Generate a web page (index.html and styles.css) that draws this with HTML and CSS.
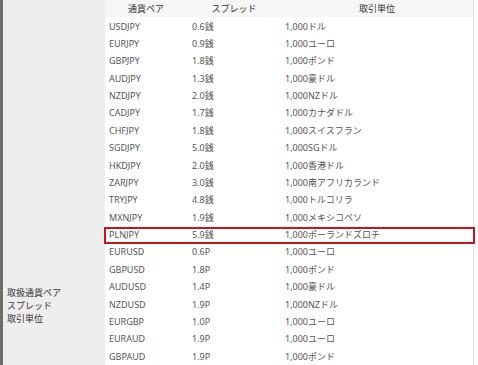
FILE: index.html
```html
<!DOCTYPE html>
<html lang="ja">
<head>
<meta charset="utf-8">
<link rel="stylesheet" href="styles.css">
</head>
<body>
<div class="page">
  <div class="label">
    <div>取扱通貨ペア</div>
    <div>スプレッド</div>
    <div>取引単位</div>
  </div>
  <div class="table">
    <div class="row head"><div>通貨ペア</div><div>スプレッド</div><div>取引単位</div></div>
    <div class="row"><div>USDJPY</div><div>0.6銭</div><div>1,000ドル</div></div>
    <div class="row"><div>EURJPY</div><div>0.9銭</div><div>1,000ユーロ</div></div>
    <div class="row"><div>GBPJPY</div><div>1.8銭</div><div>1,000ポンド</div></div>
    <div class="row"><div>AUDJPY</div><div>1.3銭</div><div>1,000豪ドル</div></div>
    <div class="row"><div>NZDJPY</div><div>2.0銭</div><div>1,000NZドル</div></div>
    <div class="row"><div>CADJPY</div><div>1.7銭</div><div>1,000カナダドル</div></div>
    <div class="row"><div>CHFJPY</div><div>1.8銭</div><div>1,000スイスフラン</div></div>
    <div class="row"><div>SGDJPY</div><div>5.0銭</div><div>1,000SGドル</div></div>
    <div class="row"><div>HKDJPY</div><div>2.0銭</div><div>1,000香港ドル</div></div>
    <div class="row"><div>ZARJPY</div><div>3.0銭</div><div>1,000南アフリカランド</div></div>
    <div class="row"><div>TRYJPY</div><div>4.8銭</div><div>1,000トルコリラ</div></div>
    <div class="row"><div>MXNJPY</div><div>1.9銭</div><div>1,000メキシコペソ</div></div>
    <div class="row hl"><div>PLNJPY</div><div>5.9銭</div><div>1,000ポーランドズロチ</div></div>
    <div class="row"><div>EURUSD</div><div>0.6P</div><div>1,000ユーロ</div></div>
    <div class="row"><div>GBPUSD</div><div>1.8P</div><div>1,000ポンド</div></div>
    <div class="row"><div>AUDUSD</div><div>1.4P</div><div>1,000豪ドル</div></div>
    <div class="row"><div>NZDUSD</div><div>1.9P</div><div>1,000NZドル</div></div>
    <div class="row"><div>EURGBP</div><div>1.0P</div><div>1,000ユーロ</div></div>
    <div class="row"><div>EURAUD</div><div>1.9P</div><div>1,000ユーロ</div></div>
    <div class="row"><div>GBPAUD</div><div>1.9P</div><div>1,000ポンド</div></div>
  </div>
</div>
</body>
</html>
```

FILE: styles.css
```css
html, body {
  margin: 0;
  padding: 0;
  background: #ffffff;
}
body {
  font-family: "Noto Sans", "Noto Sans CJK JP", sans-serif;
  font-size: 9px;
  color: #555555;
}
.page {
  display: flex;
  width: 478px;
  height: 365px;
  overflow: hidden;
}
.label {
  width: 98px;
  border-left: 3px solid #6e6e6e;
  background: #eeeeee;
  color: #333333;
  padding: 287px 0 0 4px;
  line-height: 12.8px;
  box-sizing: content-box;
}
.table {
  width: 368px;
  border-right: 1px solid #dddddd;
  display: flex;
  flex-direction: column;
}
.row {
  display: grid;
  grid-template-columns: 82px 94px 1fr;
  height: 17.38px;
  align-items: center;
  flex: none;
}
.row > div {
  padding-left: 4px;
  white-space: nowrap;
}
.row > div:nth-child(2) {
  padding-left: 5px;
}
.head {
  background: #f6f6f6;
  color: #333333;
}
.head > div,
.head > div:nth-child(2) {
  padding-left: 0;
  text-align: center;
}
.hl {
  position: relative;
}
.hl > div {
  position: relative;
  top: -0.5px;
}
.hl::after {
  content: "";
  position: absolute;
  left: -1px;
  right: -2px;
  top: 1.5px;
  bottom: -0.5px;
  border: 2.5px solid #c8141a;
}
```
